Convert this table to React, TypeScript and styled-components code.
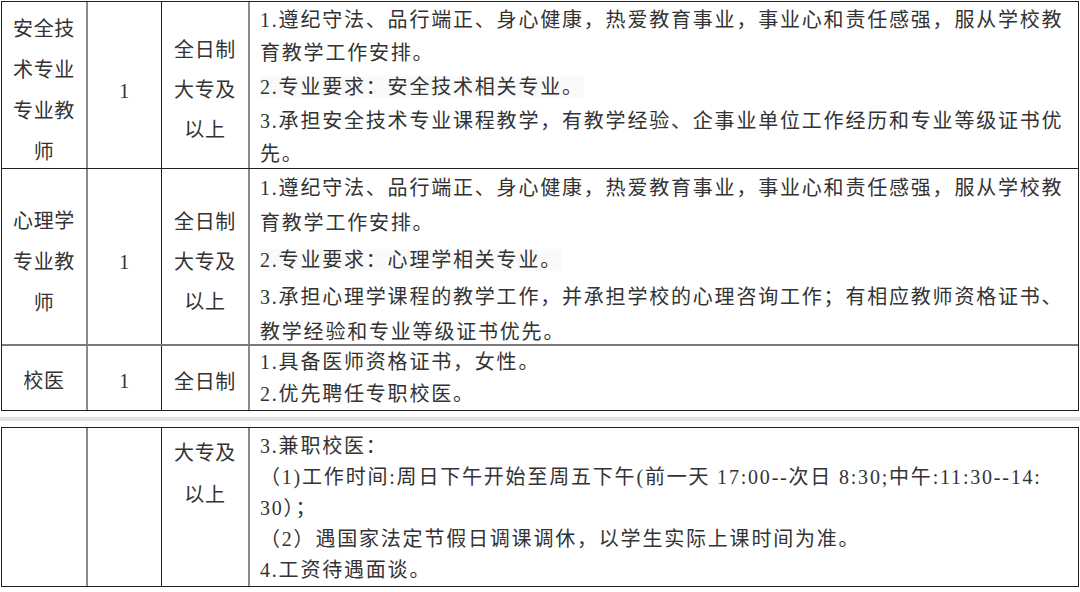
import React from "react";
import styled, { createGlobalStyle } from "styled-components";

const GlobalStyle = createGlobalStyle`
  html, body { margin: 0; padding: 0; background: #ffffff; }
  body {
    font-family: "Liberation Serif", "Noto Sans CJK SC", serif;
    color: #333333;
  }
  * { box-sizing: border-box; }
`;

const Page = styled.div`
  width: 1080px;
  height: 592px;
  padding: 1px 0 0 1px;
  display: flex;
  flex-direction: column;
  overflow: hidden;
`;

const Sheet = styled.div`
  width: 1078px;
  border: 1px solid #1f1f1f;
  display: flex;
  flex-direction: column;
  flex-shrink: 0;
`;

const Row = styled.div<{ $h: number; $line?: string }>`
  display: grid;
  grid-template-columns: 86px 74px 88px 1fr;
  grid-template-rows: 100%;
  height: ${(p) => p.$h}px;
  flex-shrink: 0;
  border-bottom: ${(p) => p.$line ?? "none"};
`;

const LabelCell = styled.div<{
  $border: string;
  $lh: number;
  $top: number;
  $align: "center" | "flex-start";
}>`
  display: flex;
  flex-direction: column;
  align-items: center;
  justify-content: ${(p) => p.$align};
  padding-top: ${(p) => p.$top}px;
  border-right: ${(p) => p.$border};
  font-size: 20px;
  letter-spacing: 0.7px;
  line-height: ${(p) => p.$lh}px;
  text-align: center;
  white-space: nowrap;
`;

const DetailCell = styled.div<{ $lh: number; $top: number; $gap: number }>`
  padding: ${(p) => p.$top}px 4px 0 10px;
  font-size: 20px;
  letter-spacing: 1.8px;
  line-height: ${(p) => p.$lh}px;
  white-space: nowrap;
  & > p + p {
    margin-top: ${(p) => p.$gap}px;
  }
`;

const Para = styled.p<{ $shade?: boolean }>`
  margin: 0;
  & > span {
    background: ${(p) => (p.$shade ? "#fafafa" : "transparent")};
  }
`;

const Band = styled.div`
  width: 1080px;
  height: 4px;
  flex-shrink: 0;
  margin: 6px 0 6px -1px;
  background: #e2e2e2;
`;

type RowData = {
  title: string[];
  count: string;
  edu: string[];
  eduLh: number;
  eduTop: number;
  eduAlign: "center" | "flex-start";
  sideTop: number;
  h: number;
  line?: string;
  lh: number;
  top: number;
  gap: number;
  items: { lines: string[]; shade?: boolean }[];
};

const GRAY = "2px solid #8a8a8a";
const DARK = "1px solid #1f1f1f";

const table1: RowData[] = [
  {
    title: ["安全技", "术专业", "专业教", "师"],
    count: "1",
    edu: ["全日制", "大专及", "以上"],
    eduLh: 40,
    eduTop: 10,
    eduAlign: "center",
    sideTop: 12,
    h: 167,
    line: "1px solid #1f1f1f",
    lh: 33,
    top: 2,
    gap: 1,
    items: [
      {
        lines: [
          "1.遵纪守法、品行端正、身心健康，热爱教育事业，事业心和责任感强，服从学校教",
          "育教学工作安排。",
        ],
      },
      { lines: ["2.专业要求：安全技术相关专业。"], shade: true },
      {
        lines: [
          "3.承担安全技术专业课程教学，有教学经验、企事业单位工作经历和专业等级证书优",
          "先。",
        ],
      },
    ],
  },
  {
    title: ["心理学", "专业教", "师"],
    count: "1",
    edu: ["全日制", "大专及", "以上"],
    eduLh: 40,
    eduTop: 11,
    eduAlign: "center",
    sideTop: 12,
    h: 177,
    line: "2px solid #7a7a7a",
    lh: 35,
    top: 2,
    gap: 2,
    items: [
      {
        lines: [
          "1.遵纪守法、品行端正、身心健康，热爱教育事业，事业心和责任感强，服从学校教",
          "育教学工作安排。",
        ],
      },
      { lines: ["2.专业要求：心理学相关专业。"], shade: true },
      {
        lines: [
          "3.承担心理学课程的教学工作，并承担学校的心理咨询工作；有相应教师资格证书、",
          "教学经验和专业等级证书优先。",
        ],
      },
    ],
  },
  {
    title: ["校医"],
    count: "1",
    edu: ["全日制"],
    eduLh: 40,
    eduTop: 7,
    eduAlign: "center",
    sideTop: 7,
    h: 64,
    lh: 32,
    top: 0,
    gap: 0,
    items: [
      { lines: ["1.具备医师资格证书，女性。"] },
      { lines: ["2.优先聘任专职校医。"] },
    ],
  },
];

const table2: RowData[] = [
  {
    title: [],
    count: "",
    edu: ["大专及", "以上"],
    eduLh: 42,
    eduTop: 4,
    eduAlign: "flex-start",
    sideTop: 0,
    h: 158,
    lh: 31,
    top: 3,
    gap: 0,
    items: [
      { lines: ["3.兼职校医："] },
      {
        lines: [
          "（1)工作时间:周日下午开始至周五下午(前一天 17:00--次日 8:30;中午:11:30--14:",
          "30）；",
        ],
      },
      { lines: ["（2）遇国家法定节假日调课调休，以学生实际上课时间为准。"] },
      { lines: ["4.工资待遇面谈。"] },
    ],
  },
];

const Lines: React.FC<{ lines: string[] }> = ({ lines }) => (
  <>
    {lines.map((l, i) => (
      <div key={i}>{l}</div>
    ))}
  </>
);

const TableRow: React.FC<{ row: RowData }> = ({ row }) => (
  <Row $h={row.h} $line={row.line}>
    <LabelCell $border={GRAY} $lh={41} $top={row.sideTop} $align="center">
      <Lines lines={row.title} />
    </LabelCell>
    <LabelCell $border={DARK} $lh={41} $top={row.sideTop} $align="center">
      {row.count}
    </LabelCell>
    <LabelCell $border={GRAY} $lh={row.eduLh} $top={row.eduTop} $align={row.eduAlign}>
      <Lines lines={row.edu} />
    </LabelCell>
    <DetailCell $lh={row.lh} $top={row.top} $gap={row.gap}>
      {row.items.map((it, i) => (
        <Para key={i} $shade={it.shade}>
          {it.lines.map((l, j) => (
            <React.Fragment key={j}>
              {j > 0 && <br />}
              <span>{l}</span>
            </React.Fragment>
          ))}
        </Para>
      ))}
    </DetailCell>
  </Row>
);

export default function App() {
  return (
    <>
      <GlobalStyle />
      <Page>
        <Sheet>
          {table1.map((r, i) => (
            <TableRow key={i} row={r} />
          ))}
        </Sheet>
        <Band />
        <Sheet>
          {table2.map((r, i) => (
            <TableRow key={i} row={r} />
          ))}
        </Sheet>
      </Page>
    </>
  );
}
